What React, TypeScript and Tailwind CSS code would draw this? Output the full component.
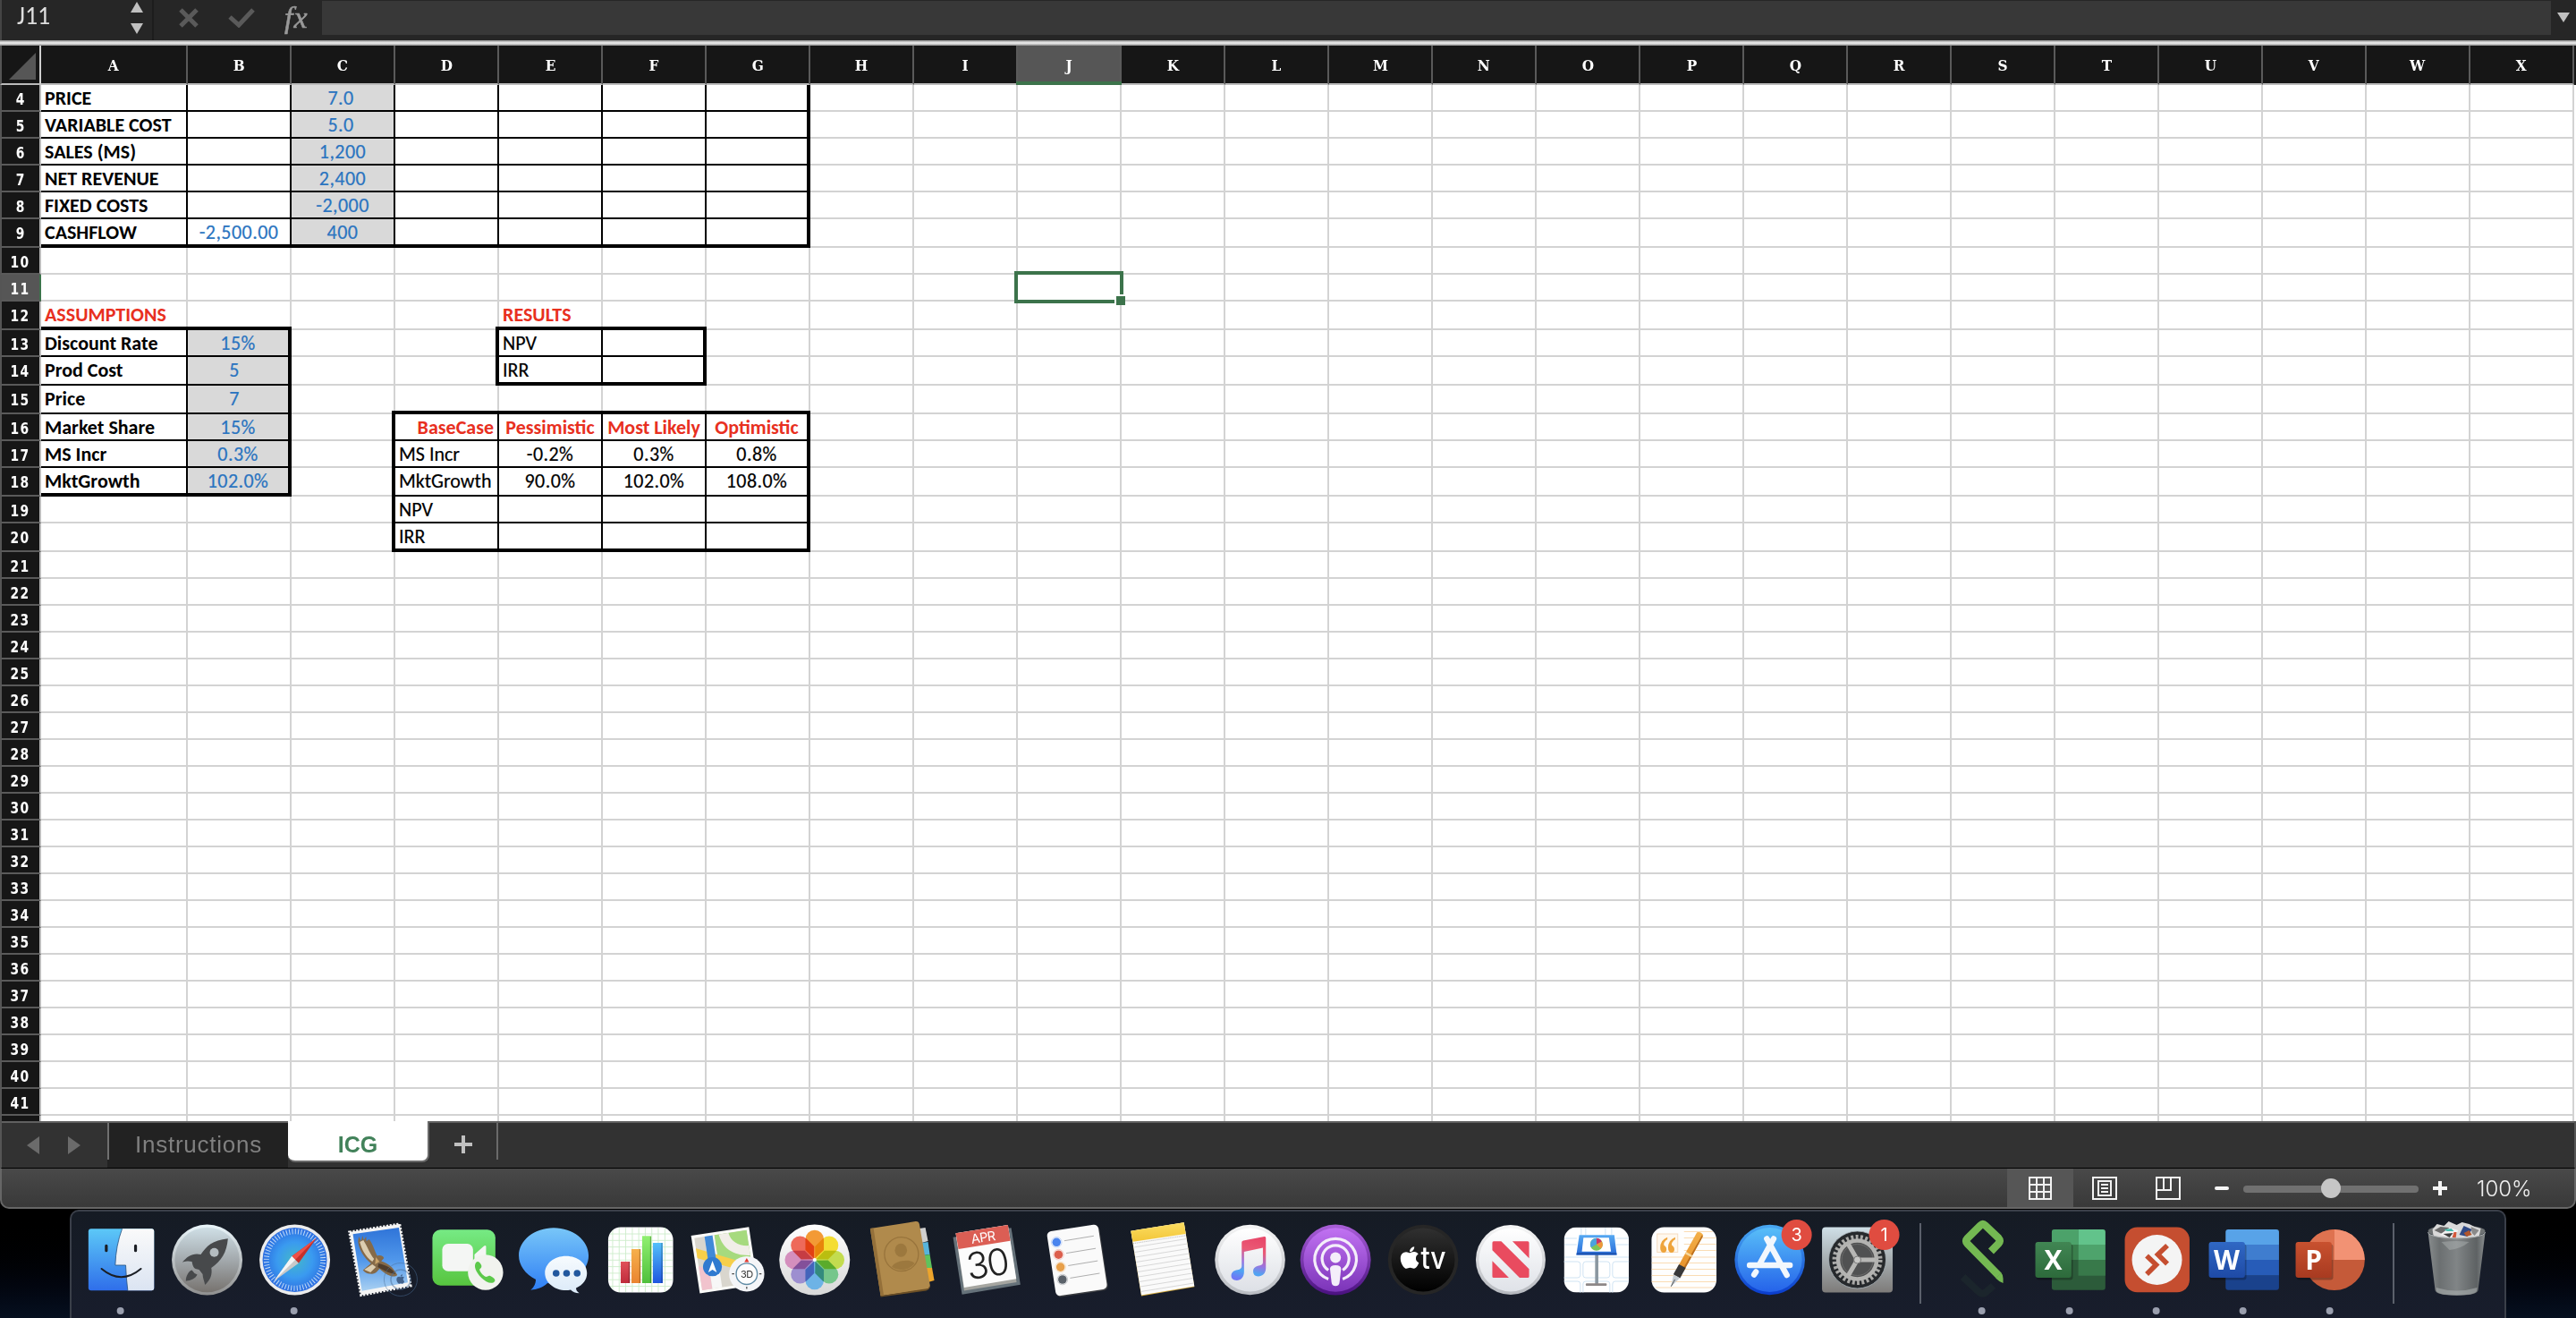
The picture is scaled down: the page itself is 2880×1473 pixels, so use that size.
import React from "react";
import { FaApple } from "react-icons/fa";

/* ---------- Spreadsheet data ---------- */

const COLUMNS = "ABCDEFGHIJKLMNOPQRSTUVWX".split("");
const TALL_ROWS = [9, 12, 14, 15, 18, 20];
const ROWS = Array.from({ length: 38 }, (_, i) => i + 4);

const BOLD = "justify-start pl-1 font-bold text-black";
const PLAIN = "justify-start pl-1 text-black [-webkit-text-stroke:0.2px]";
const BLUE = "justify-center text-[#2a74c0] tracking-[0.45px] [-webkit-text-stroke:0.2px]";
const RED = "justify-center font-bold text-[#e8301f]";
const RED_LEFT = "justify-start pl-1 font-bold text-[#e8301f]";
const NUM = "justify-center text-black tracking-[0.45px] [-webkit-text-stroke:0.2px]";

const CELLS: Record<string, [string, string]> = {
  A4: ["PRICE", BOLD],
  A5: ["VARIABLE COST", BOLD],
  A6: ["SALES (MS)", BOLD],
  A7: ["NET REVENUE", BOLD],
  A8: ["FIXED COSTS", BOLD],
  A9: ["CASHFLOW", BOLD],
  B9: ["-2,500.00", BLUE],
  C4: ["7.0", BLUE + " pr-1"],
  C5: ["5.0", BLUE + " pr-1"],
  C6: ["1,200", BLUE],
  C7: ["2,400", BLUE],
  C8: ["-2,000", BLUE],
  C9: ["400", BLUE],
  A12: ["ASSUMPTIONS", RED_LEFT],
  E12: ["RESULTS", RED_LEFT],
  A13: ["Discount Rate", BOLD],
  A14: ["Prod Cost", BOLD],
  A15: ["Price", BOLD],
  A16: ["Market Share", BOLD],
  A17: ["MS Incr", BOLD],
  A18: ["MktGrowth", BOLD],
  B13: ["15%", BLUE],
  B14: ["5", BLUE + " pr-2"],
  B15: ["7", BLUE + " pr-2"],
  B16: ["15%", BLUE],
  B17: ["0.3%", BLUE],
  B18: ["102.0%", BLUE],
  E13: ["NPV", PLAIN],
  E14: ["IRR", PLAIN],
  D16: ["BaseCase", "justify-end pr-[4px] font-bold text-[#e8301f]"],
  E16: ["Pessimistic", RED],
  F16: ["Most Likely", RED],
  G16: ["Optimistic", RED],
  D17: ["MS Incr", PLAIN],
  D18: ["MktGrowth", PLAIN],
  D19: ["NPV", PLAIN],
  D20: ["IRR", PLAIN],
  E17: ["-0.2%", NUM],
  F17: ["0.3%", NUM],
  G17: ["0.8%", NUM],
  E18: ["90.0%", NUM],
  F18: ["102.0%", NUM],
  G18: ["108.0%", NUM],
};

/* Bordered blocks: first/last column, first/last row, and whether the left/top edges are thick */
const BLOCKS = [
  { c0: 0, c1: 6, r0: 4, r1: 9, left: false, top: false },
  { c0: 0, c1: 1, r0: 13, r1: 18, left: false, top: true },
  { c0: 4, c1: 5, r0: 13, r1: 14, left: true, top: true },
  { c0: 3, c1: 6, r0: 16, r1: 20, left: true, top: true },
];

function borders(c: number, r: number) {
  let right = "border-r-2 border-r-[#d3d3d3]";
  let bottom = "border-b-2 border-b-[#d3d3d3]";
  let corner = "";
  for (const b of BLOCKS) {
    const inR = r >= b.r0 && r <= b.r1;
    const inC = c >= b.c0 && c <= b.c1;
    const edgeL = b.left && c === b.c0 - 1;
    const edgeT = b.top && r === b.r0 - 1;
    if (inR && inC) {
      right = c === b.c1 ? "border-r-4 border-r-black" : "border-r-2 border-r-black";
      bottom = r === b.r1 ? "border-b-4 border-b-black" : "border-b-2 border-b-black";
    }
    if (inR && edgeL) right = "border-r-4 border-r-black";
    if (inC && edgeT) bottom = "border-b-4 border-b-black";
    if ((inR || edgeT) && (inC || edgeL)) {
      const w = edgeL || c === b.c1 ? "w-1" : "w-0.5";
      const h = edgeT || r === b.r1 ? "h-1" : "h-0.5";
      corner = w + " " + h;
    }
  }
  if (corner) {
    corner += right.startsWith("border-r-4") ? " -right-1" : " -right-0.5";
    corner += bottom.startsWith("border-b-4") ? " -bottom-1" : " -bottom-0.5";
  }
  return { edges: right + " " + bottom, corner };
}

function Cell({ c, r }: { c: number; r: number }) {
  const data = CELLS[COLUMNS[c] + r];
  const shaded = (c === 2 && r <= 9) || (c === 1 && r >= 13 && r <= 18);
  const selected = c === 9 && r === 11;
  const { edges, corner } = borders(c, r);
  return (
    <div
      className={`relative flex items-start ${c === 0 ? "w-[164px]" : "w-[116px]"} shrink-0 ${shaded ? "bg-[#d9d9d9]" : "bg-white"} ${edges}`}
    >
      {data && (
        <div className={`flex h-6 w-full whitespace-nowrap text-[22px] leading-[29px] ${data[1]}`}>{data[0]}</div>
      )}
      {corner && <div className={`absolute bg-black ${corner}`} />}
      {selected && (
        <>
          <div className="absolute -inset-1 z-10 border-4 border-[#3c734b]" />
          <div className="absolute left-[108px] top-[22px] z-20 h-3 w-3 border-l-2 border-t-2 border-white bg-[#3c734b]" />
        </>
      )}
    </div>
  );
}

function Sheet() {
  return (
    <div className="flex h-[1202px] flex-col overflow-hidden bg-white font-['Carlito','Lato','Liberation_Sans',sans-serif]">
      <div className="flex h-11 shrink-0 bg-[#161616]">
        <div className="flex w-[46px] shrink-0 items-end justify-end border-b-2 border-l-2 border-r-2 border-b-[#bbbbbb] border-l-[#555] border-r-[#cfcfcf] pb-1 pr-1">
          <svg width="30" height="30" viewBox="0 0 30 30"><path d="M30 0V30H0Z" fill="#565656" /></svg>
        </div>
        {COLUMNS.map((l, c) => (
          <div
            key={l}
            className={`relative flex shrink-0 items-center justify-center border-b-2 border-r-2 border-b-[#bbbbbb] border-r-[#5a5a5a] pt-1 font-['DejaVu_Serif',serif] text-[17px] font-bold text-white ${c === 0 ? "w-[164px]" : "w-[116px]"} ${l === "J" ? "bg-[#565656]" : ""}`}
          >
            <span className="scale-x-90">{l}</span>
            {l === "J" && <div className="absolute -bottom-0.5 -left-0.5 -right-0.5 z-10 h-1 bg-[#3c734b]" />}
          </div>
        ))}
      </div>
      {[...ROWS, 42].map((r) => (
        <div key={r} className={`flex shrink-0 ${TALL_ROWS.includes(r) ? "h-8" : "h-[30px]"}`}>
          <div
            className={`flex w-[46px] shrink-0 justify-center border-b-2 border-l-2 border-r-2 border-b-[#5a5a5a] border-l-[#555] font-['DejaVu_Sans_Condensed','DejaVu_Sans',sans-serif] text-[17.5px] font-bold leading-[32px] text-white ${r === 11 ? "border-r-[#3c734b] bg-[#565656]" : "border-r-[#bbbbbb] bg-[#161616]"}`}
          >
            <span className="h-6 scale-x-[0.88] tracking-[1.6px]">{r < 42 ? r : ""}</span>
          </div>
          {COLUMNS.map((l, c) => (
            <Cell key={l} c={c} r={r} />
          ))}
        </div>
      ))}
    </div>
  );
}

/* ---------- Formula bar ---------- */

function FormulaBar() {
  return (
    <div className="flex h-[45px] items-start border-l-2 border-[#444] bg-[#262626]">
      <div className="flex h-[45px] w-[170px] items-start justify-between border-r-2 border-[#1d1d1d] pl-[17px] pr-[10px]">
        <span className="font-['Carlito','Lato',sans-serif] text-[28px] leading-[36px] text-[#dedede]">J11</span>
        <svg className="mt-0.5" width="14" height="36" viewBox="0 0 14 36">
          <path d="M0 12L7 0L14 12Z M0 24H14L7 36Z" fill="#c0c0c0" />
        </svg>
      </div>
      <svg className="ml-[28px] mt-[9px]" width="22" height="22" viewBox="0 0 22 22" fill="none" stroke="#5a5a5a" strokeWidth="5">
        <path d="M2 2L20 20M20 2L2 20" />
      </svg>
      <svg className="ml-[33px] mt-[9px]" width="30" height="22" viewBox="0 0 30 22" fill="none" stroke="#5a5a5a" strokeWidth="5">
        <path d="M2 10L12 19L28 2" />
      </svg>
      <span className="ml-[33px] w-[42px] font-['Liberation_Serif',serif] text-[34px] italic leading-[40px] tracking-[1px] text-[#999] [-webkit-text-stroke:0.6px]">fx</span>
      <div className="mt-px h-[38px] flex-1 bg-[#383838]" />
      <div className="flex h-[45px] w-[28px] justify-center pt-[14px]">
        <svg width="14" height="11" viewBox="0 0 14 11"><path d="M0 0H14L7 11Z" fill="#c0c0c0" /></svg>
      </div>
    </div>
  );
}

/* ---------- Tabs and status bar ---------- */

function TabBar() {
  return (
    <div className="flex h-[52px] items-start border-l-2 border-r-2 border-[#555] bg-[#323232] font-['Liberation_Sans',sans-serif] text-[25px]">
      <div className="flex h-full w-[118px] items-center gap-8 border-t-2 border-[#606060] pl-7">
        <svg width="14" height="20" viewBox="0 0 14 20"><path d="M14 0V20L0 10Z" fill="#6b6b6b" /></svg>
        <svg width="14" height="20" viewBox="0 0 14 20"><path d="M0 0V20L14 10Z" fill="#6b6b6b" /></svg>
      </div>
      <div className="h-full w-[202px] border-t-2 border-[#606060] bg-[#222222]">
        <div className="h-[41px] border-l-2 border-[#707070] text-center text-[26px] leading-[49px] tracking-[0.75px] text-[#808080]">Instructions</div>
      </div>
      <div className="h-[46px] w-[158px] rounded-b-lg border-b-2 border-r-2 border-[#6a6a6a] bg-white text-center font-bold leading-[52px] text-[#42825a]">ICG</div>
      <div className="h-full flex-1 border-t-2 border-[#606060]">
        <div className="flex h-[41px] w-[77px] items-center justify-center border-r-2 border-[#6a6a6a] pt-[7px]">
          <svg width="20" height="20" viewBox="0 0 20 20"><path d="M10 0V20M0 10H20" stroke="#c0c0c0" strokeWidth="4" /></svg>
        </div>
      </div>
    </div>
  );
}

function StatusBar() {
  return (
    <div className="flex h-[46px] items-stretch justify-end rounded-b-[10px] border-b-2 border-l-2 border-r-2 border-t border-[#666] border-t-black bg-linear-to-b from-[#494949] to-[#393939]">
      <div className="flex w-[74px] items-center justify-center bg-[#565656]">
        <svg width="26" height="26" viewBox="0 0 26 26" fill="none" stroke="#f2f2f2" strokeWidth="2">
          <path d="M1 1H25V25H1ZM9 1V25M17 1V25M1 9H25M1 17H25" />
        </svg>
      </div>
      <div className="flex w-[69px] items-center justify-center">
        <svg width="28" height="26" viewBox="0 0 28 26" fill="none" stroke="#f2f2f2" strokeWidth="2">
          <path d="M1 1H27V25H1ZM7 5H21V21H7ZM10 9H18M10 13H18M10 17H18" />
        </svg>
      </div>
      <div className="flex w-[73px] items-center justify-center">
        <svg width="28" height="26" viewBox="0 0 28 26" fill="none" stroke="#f2f2f2" strokeWidth="2">
          <path d="M1 1H27V25H1ZM9 1V15M17 1V15M1 15H18" />
        </svg>
      </div>
      <div className="flex w-[298px] items-center pl-4">
        <div className="h-1 w-4 rounded-xs bg-[#f5f5f5]" />
        <div className="relative ml-4 mt-0.5 h-2 w-[196px] rounded-full bg-[#707070]">
          <div className="absolute -top-2 left-[87px] h-[22px] w-[22px] rounded-full bg-[#c6c6c6]" />
        </div>
        <svg className="ml-4" width="16" height="16" viewBox="0 0 16 16"><path d="M8 0V16M0 8H16" stroke="#f5f5f5" strokeWidth="4" /></svg>
      </div>
      <div className="w-[120px] pl-[11px] font-['Inter','Open_Sans',sans-serif] text-[24px] font-light leading-[45px] text-[#f0f0f0]">100%</div>
    </div>
  );
}

/* ---------- Dock icons: origin is the centre of each slot ---------- */

function Grad({ id, stops }: { id: string; stops: string[] }) {
  return (
    <linearGradient id={id} x1="0" y1="0" x2="0" y2="1">
      {stops.map((s, i) => (
        <stop key={i} offset={i / (stops.length - 1)} stopColor={s} />
      ))}
    </linearGradient>
  );
}

const Finder = () => (
  <>
    <Grad id="fnB" stops={["#5cc8f7", "#2f6eea"]} />
    <Grad id="fnW" stops={["#fafafa", "#dbe4f2"]} />
    <rect x="-36.7" y="-34.7" width="73.4" height="69" rx="3" fill="url(#fnB)" />
    <path d="M1-34.7H34Q36.7-34.7 36.7-32V31.3Q36.7 34.3 34 34.3H7.3Q5.5 20 5 6H-6.7Q-6-16 1-34.7Z" fill="url(#fnW)" />
    <path d="M1-34.7Q-6-16-6.7 6H5Q5.5 20 7.3 34.3" fill="none" stroke="#26507e" strokeWidth="0.8" />
    <path d="M-16.7-15.7V-10.3M16-15.7V-10.3" stroke="#1b1e24" strokeWidth="3.2" strokeLinecap="round" />
    <path d="M-22 10Q0 28.4 22 10" fill="none" stroke="#1b1e24" strokeWidth="2" strokeLinecap="round" />
  </>
);

const Launchpad = () => (
  <>
    <Grad id="lpA" stops={["#cfdfe6", "#a3a9ad", "#77736f"]} />
    <Grad id="lpB" stops={["#eaf6fb", "#8f8f8f"]} />
    <circle r="39.5" fill="url(#lpB)" />
    <circle r="36.2" fill="url(#lpA)" />
    <path d="M23.3-23.7C6-22-1-15-7-6C-16-8-22-4-27.7 2.7C-22 1-20 1.5-17 2C-16 7-15 9-13 10L-9 11L-5 16C-5 20-3 24-2.3 28C4 22 6 16 4.7 9C16 1 22-8 23.3-23.7Z" fill="#47494b" />
    <circle cx="8" cy="-8.3" r="5" fill="#b4bcc0" />
    <path d="M-23.7 23.7C-24 18-20 12-17 11.5Q-15 15-11 16.5C-13 21-18 23-23.7 23.7Z" fill="#47494b" />
  </>
);

const Safari = () => (
  <>
    <radialGradient id="sfA">
      <stop offset="0" stopColor="#44b8c8" />
      <stop offset="0.55" stopColor="#3a9af0" />
      <stop offset="1" stopColor="#2c6de0" />
    </radialGradient>
    <circle r="39.5" fill="#ececec" />
    <circle r="36" fill="url(#sfA)" />
    <circle r="31.7" fill="none" stroke="#dbeafa" strokeWidth="6" strokeDasharray="1 2.32" opacity="0.85" />
    <path d="M24.3-24.3L-3.3-4L4.3 3.7Z" fill="#c5302a" />
    <path d="M24.3-24.3L-3.3-4L0.5 0Z" fill="#ee5047" />
    <path d="M-23.3 23.7L-3.3-4L4.3 3.7Z" fill="#c9c9c9" />
    <path d="M-23.3 23.7L-3.3-4L0.5 0Z" fill="#f5f5f5" />
  </>
);

const Mail = () => (
  <>
    <Grad id="mlA" stops={["#2f74d8", "#4f96ea", "#a8d0f2"]} />
    <path d="M-34.5-31L21.5-40L33.8 29L-21.5 39.5Z" fill="#f4f4f4" stroke="#f4f4f4" strokeWidth="3" strokeDasharray="2.2 1.6" />
    <path d="M-30.7-28.7L20.7-36L30.7 25.3L-20.7 34.7Z" fill="url(#mlA)" />
    <path d="M-25-21L-24-26L-21.5-21L-20-27L-18.5-22L-16-26L-15.5-21L-12.5-23C-8-17-7-11-3.5-4.5C0-5.5 2.5-5 4-2L1 1.5C9 4 14 8 19 17C15 20.5 8 18-1 10C-4 14-7 16.5-11 15.5Q-16 16-19.5 11.5L-10.5 4C-18-2-24-11-25-21Z" fill="#856a49" />
    <path d="M-23-20L-19-22C-14-14-12-7-7-1L-9 2C-17-4-21-12-23-20ZM-18 11L-9 5L-5 8L-11 14Z" fill="#dccdb0" />
    <path d="M-2 4C6 6 13 9 17 16C10 15 4 12-3 8Z" fill="#4f3d2c" />
    <path d="M-5-3L-1 2L-6 5Z" fill="#c9a36a" />
    <g fill="none" stroke="#4b6f99" opacity="0.5">
      <circle cx="22.7" cy="22" r="18.5" strokeWidth="1" />
      <circle cx="22.7" cy="22" r="11" strokeWidth="1.5" />
    </g>
    <FaApple x="16.5" y="15.5" size={12} color="#42628c" />
  </>
);

const FaceTime = () => (
  <>
    <Grad id="ftA" stops={["#76ea84", "#57c53f"]} />
    <rect x="-39.7" y="-33.7" width="70.4" height="62.4" rx="9" fill="url(#ftA)" />
    <rect x="-28.7" y="-18" width="34.4" height="30.7" rx="6.5" fill="#f4f6f4" />
    <path d="M7.3-6L18-15.5Q20.3-17 20.3-14.5V10H7.3Z" fill="#f4f6f4" />
    <circle cx="19.7" cy="14" r="19.7" fill="#f1f3ee" />
    <path d="M9 3C11 1 13 2 15 6C16 9 13 10 13 11C14 15 18 18 20 19C22 19 23 17 25 18C29 20 31 22 30 24C27 28 20 25 15 20C9 14 6 7 9 3Z" fill="#5cc94a" />
  </>
);

const Messages = () => (
  <>
    <Grad id="msA" stops={["#78c6f8", "#2f7ff5"]} />
    <Grad id="msB" stops={["#f7fbfe", "#dbeaf8"]} />
    <path d="M0-35.7C21.5-35.7 39-21.8 39-4.7S21.5 26.5 0 26.5Q-4 26.5-7 26C-12 31-19 33-25.7 33.7Q-20 29-20 22C-32 16-39 6-39-4.7C-39-21.8-21.5-35.7 0-35.7Z" fill="url(#msA)" />
    <path d="M13.7-4.3C27-4.3 37.2 4.2 37.2 14.7C37.2 22 33 28 25 31.5Q25 35 28.7 37.3Q22 37 19 33.5Q16 34 13.7 34C0.7 34-9.8 25.3-9.8 14.7S0.7-4.3 13.7-4.3Z" fill="url(#msB)" />
    <g fill="#22589e">
      <circle cx="2.7" cy="15" r="3.8" />
      <circle cx="14.4" cy="15" r="3.8" />
      <circle cx="26.2" cy="15" r="3.8" />
    </g>
  </>
);

const Numbers = () => (
  <>
    <Grad id="nuR" stops={["#e0505a", "#c02c3c"]} />
    <Grad id="nuO" stops={["#f6b04c", "#ea8430"]} />
    <Grad id="nuG" stops={["#90f070", "#50c03c"]} />
    <Grad id="nuB" stops={["#54c0fa", "#1e56e0"]} />
    <rect x="-36" y="-36.4" width="72.6" height="73" rx="14" fill="#fff" />
    <path
      d="M-31-33V33M-23.7-36V36M-16.4-36V36M-9-36V36M-1.8-36V36M5.5-36V36M12.8-36V36M20-36V36M27.4-36V36M-34-29H34M-36-21.7H36M-36-14.4H36M-36-7H36M-36 .3H36M-36 7.6H36M-36 14.9H36M-36 22.2H36M-34 29.5H34"
      stroke="#cdeccb" strokeWidth="0.9"
    />
    <rect x="-22" y="2" width="10.3" height="24" fill="url(#nuR)" />
    <rect x="-10" y="-12" width="10.3" height="38" fill="url(#nuO)" />
    <rect x="2" y="-26.7" width="10.3" height="52.7" fill="url(#nuG)" />
    <rect x="14" y="-19" width="11" height="45" fill="url(#nuB)" />
    <path d="M-12.6 2V26M-.6-12V26M11.4-26V26M24-19V26" stroke="#000" strokeOpacity="0.3" />
  </>
);

const Maps = () => (
  <>
    <clipPath id="mpC"><rect x="-29.5" y="-29.5" width="59" height="59" /></clipPath>
    <g transform="translate(-3 0.4) rotate(-8.6)">
      <rect x="-32.7" y="-32.7" width="65.4" height="65.4" fill="#fbfbf8" />
      <g clipPath="url(#mpC)">
        <rect x="-30" y="-30" width="60" height="60" fill="#d9d6ce" />
        <path d="M-7-30H30V12L-7-6Z" fill="#a6da7e" />
        <path d="M-2-30C0-12 12-3 30-1V-12C18-13 10-20 9-30Z" fill="#f1eee8" />
        <path d="M-30 2L-18 8V30H-30Z" fill="#f1c3cd" />
        <path d="M-18-30H-7V30H-18Z" fill="#f7f7f7" />
        <path d="M-30-18L30 10V20L-30-7Z" fill="#f7cf4a" />
        <path d="M-18-30H-9V8H-18Z" fill="#4089d8" />
      </g>
    </g>
    <circle cx="-16.3" cy="7.7" r="10.6" fill="#2f7ad0" />
    <path d="M-16.3 1L-11.5 14L-16.3 11L-21 14Z" fill="#fff" />
    <circle cx="22" cy="15.7" r="19.7" fill="#f4f5f8" />
    <circle cx="22" cy="15.7" r="11.8" fill="#fdfdfe" stroke="#5f8ba5" strokeWidth="1.4" />
    <path d="M22-2L24.6 2.6H19.4Z" fill="#e13a30" />
    <path d="M5.5 15.7H8M36 15.7H38.5M22 30V32.5" stroke="#444" strokeWidth="1.2" />
    <text x="22" y="19.7" textAnchor="middle" fontFamily="Inter, sans-serif" fontSize="11" letterSpacing="-0.5" fill="#333">3D</text>
  </>
);

const PETALS = ["#f39a35", "#f4dd33", "#c3dc4f", "#76c68b", "#6db3e6", "#9d8fd0", "#d48fbd", "#ee6a5a"];
const Photos = () => (
  <>
    <Grad id="phA" stops={["#ffffff", "#d8d8d8"]} />
    <circle r="39.5" fill="url(#phA)" />
    <g className="isolate">
      {PETALS.map((p, i) => (
        <path key={p} className="mix-blend-multiply" d="M0-1L-10.3-11V-23A10.3 10.3 0 0 1 10.3-23V-11Z" fill={p} transform={`rotate(${i * 45})`} />
      ))}
    </g>
    <circle r="2" fill="#fff" />
  </>
);

const Contacts = () => (
  <>
    <path d="M19-35L26-36L29-21L22-19Z" fill="#cfcfcf" />
    <path d="M22-19L29-20L31-6L24-5Z" fill="#58b4dc" />
    <path d="M24-5L31-6L33.5 9L27 10Z" fill="#5fc35c" />
    <path d="M26 9L33.5 9L36 23L29 25Z" fill="#eda52c" />
    <path d="M-35.7-35L15-43Q18.5-43.5 19.3-40L31.3 29Q31 32 27 33L-24 40.3Z" fill="#b08a4c" />
    <path d="M-35.7-35L-32-35.6L-20.5 39.8L-24 40.3Z" fill="#94703a" />
    <path d="M-24 40.3L29 32L31 29V31Q30 34 27 34.5L-24 41.5Z" fill="#6d5026" />
    <circle cx="-0.7" cy="-6.3" r="19" fill="none" stroke="#98743c" strokeWidth="1.3" />
    <ellipse cx="-1.3" cy="-10.7" rx="6.8" ry="7.5" fill="#9c783e" />
    <path d="M-11.5 8C-9 1 10-2 14 4A19 19 0 0 1-11.5 8Z" fill="#9c783e" />
  </>
);

const Calendar = () => (
  <>
    <path d="M-37-25.3L28-35.7L38.3 27.7L-27 38.7Z" fill="#66727a" />
    <path d="M-34-29.7L24.3-39L34 25L-24.7 34.5Z" fill="#a5a5a0" />
    <path d="M-34-29.7L24.3-39L33.7 21.3L-24.7 31Z" fill="#fcfcfc" />
    <path d="M-34-29.7L24.3-39L27-21.3L-31-12Z" fill="#db5e54" />
    <text transform="translate(-2.6 -20) rotate(-8.8)" textAnchor="middle" fontFamily="Inter, sans-serif" fontSize="14.5" letterSpacing="-0.5" fill="#fff">APR</text>
    <text transform="translate(3.3 19) rotate(-8.8)" textAnchor="middle" fontFamily="Inter, sans-serif" fontWeight="300" fontSize="41" letterSpacing="-2" fill="#222">30</text>
  </>
);

const Reminders = () => (
  <>
    <g transform="rotate(-8.6)">
      <rect x="-28" y="-34.5" width="58.5" height="73" rx="5" fill="#3a3c40" />
      <rect x="-28.5" y="-36" width="58" height="73" rx="5" fill="#fafafa" />
    </g>
    {["#4a84ee", "#dc5f4d", "#e8a04a", "#5b626a"].map((c, i) => (
      <g key={c} transform={`translate(${i * 2.2} ${i * 13.9})`}>
        <circle cx="-22.3" cy="-19.7" r="5.8" fill="none" stroke={c} strokeOpacity="0.3" />
        <circle cx="-22.3" cy="-19.7" r="4.8" fill={c} />
        <path d="M-13.7-21.3L19.3-26.7" stroke="#9a9a9a" strokeWidth="0.8" />
      </g>
    ))}
  </>
);

const Notes = () => (
  <>
    <Grad id="ntA" stops={["#fbdd62", "#f3c638"]} />
    <path d="M-35-32.3L24.3-41.7L36 30.3L-23.3 40.5Z" fill="#d3a93a" />
    <path d="M-35-32.3L24.3-41.7L36 29.6L-23.3 39.6Z" fill="#fafafa" />
    <path d="M-35-32.3L24.3-41.7L26.3-29L-32.9-20.3Z" fill="url(#ntA)" />
    <path d="M-32.5-18.3L26.5-27.2" stroke="#999" strokeWidth="0.7" strokeDasharray="1 1" />
    {[0, 1, 2, 3, 4, 5, 6, 7, 8, 9].map((i) => (
      <path key={i} d="M-31.8-14L27.3-23.5" stroke="#cfcfcf" strokeWidth="0.8" transform={`translate(${i * 0.9} ${i * 5.5})`} />
    ))}
  </>
);

const Music = () => (
  <>
    <Grad id="muA" stops={["#ffffff", "#dde0e6"]} />
    <Grad id="muC" stops={["#f5f5f5", "#b9bcc2"]} />
    <linearGradient id="muB" x1="0.6" y1="0" x2="0.4" y2="1">
      <stop offset="0" stopColor="#e8486a" />
      <stop offset="0.3" stopColor="#ea5a75" />
      <stop offset="0.6" stopColor="#9a74e0" />
      <stop offset="0.8" stopColor="#4ea6f2" />
      <stop offset="1" stopColor="#6e78f5" />
    </linearGradient>
    <circle r="39.3" fill="url(#muC)" />
    <circle r="35.5" fill="url(#muA)" />
    <path d="M-9.3-19.5Q-9.3-21-7.5-21.4L16-26Q17.7-26.3 17.7-24.5V9C17.7 15 14 18.5 9 18.5Q3.5 18 3.5 13C3.5 9 6.5 7.3 10 6.6Q14.4 5.8 14.4 3V-13.5L-6.7-9V13.5C-6.7 19-10 23-15 23Q-21 22.5-21 18C-21 14-18 12-14 11.3Q-9.3 10.5-9.3 7Z" fill="url(#muB)" />
  </>
);

const Podcasts = () => (
  <>
    <Grad id="pcA" stops={["#c172f2", "#7b34b8"]} />
    <Grad id="pcB" stops={["#a95fd8", "#4a1180"]} />
    <circle r="39.5" fill="url(#pcB)" />
    <circle r="35.8" fill="url(#pcA)" />
    <g fill="none" stroke="#f4eefa" strokeWidth="3.2">
      <path d="M-8 21.5A23.3 23.3 0 1 1 8 21.5" />
      <path d="M-8 11.5A15 15 0 1 1 8 11.5" />
    </g>
    <circle cy="-2.5" r="6" fill="#f4eefa" />
    <path d="M-6.2 10Q-6 6 0 6T6.2 10L4.5 25Q4 29.3 0 29.3T-4.5 25Z" fill="#f4eefa" />
  </>
);

const AppleTV = () => (
  <>
    <Grad id="tvA" stops={["#303030", "#000000"]} />
    <circle r="39.3" fill="#262626" />
    <circle r="35.5" fill="url(#tvA)" />
    <FaApple x="-29" y="-16.5" size={28} color="#fff" />
    <text x="-2.5" y="10.3" fontFamily="Inter, sans-serif" fontWeight="500" fontSize="34" textLength="28" lengthAdjust="spacingAndGlyphs" fill="#fff">tv</text>
  </>
);

const News = () => (
  <>
    <Grad id="nwA" stops={["#ffffff", "#dfe2e8"]} />
    <Grad id="nwB" stops={["#f7f7f7", "#b5b8be"]} />
    <circle r="39" fill="url(#nwB)" />
    <circle r="35.5" fill="url(#nwA)" />
    <path d="M-20.5-19Q-20.5-20.7-19-20.7H-10.6L20.6 10.3V18.5Q20.6 20 19 20H10L-20.5-10.7ZM2-20.7H19Q20.6-20.7 20.6-19V-1.7ZM-20.5 1.3L-2 20H-19Q-20.5 20-20.5 18.5Z" fill="#e94b5f" />
  </>
);

const Keynote = () => (
  <>
    <Grad id="knA" stops={["#55a8f2", "#2a6cd8"]} />
    <clipPath id="knC"><rect x="-36.3" y="-36.4" width="72.6" height="73" rx="14" /></clipPath>
    <g clipPath="url(#knC)">
      <rect x="-36.3" y="-36.4" width="72.6" height="73" fill="#fff" />
      <g fill="none" stroke="#cfe3f3" strokeWidth="1">
        <path d="M-17-36V-28M-12-36V-28M10-36V-28M17-36V-28M-36-24H-22M-36-17H-22M22-24H36M22-17H36M-36-3H36" />
        <rect x="-40" y="2" width="22" height="18" rx="3" />
        <rect x="-15" y="2" width="30" height="18" rx="3" />
        <rect x="18" y="2" width="22" height="18" rx="3" />
        <rect x="-40" y="24" width="22" height="18" rx="3" />
        <rect x="-15" y="24" width="30" height="18" rx="3" />
        <rect x="18" y="24" width="22" height="18" rx="3" />
      </g>
    </g>
    <rect x="-1.5" y="-6" width="3.6" height="34" fill="#8b97a0" />
    <rect x="-12" y="26.3" width="23.5" height="2.6" rx="1" fill="#8d8787" />
    <path d="M-19.2-27.7H20L22.7-5.5H-22.4Z" fill="url(#knA)" />
    <path d="M-22-8H22.3L22.7-5.5H-22.4Z" fill="#1f57b5" />
    <path d="M-14.5-24.7H14L16.3-9.3H-16.3Z" fill="#fff" />
    <circle cy="-17.3" r="7" fill="#7cc55a" />
    <path d="M0-17.3V-24.3A7 7 0 0 1 6-20.5Z" fill="#c9366a" />
    <path d="M0-17.3L6-20.5A7 7 0 0 1 5-12.5Z" fill="#f0953a" />
    <path d="M0-17.3V-24.3A7 7 0 0 0-6-13.8Z" fill="#4ba2e0" />
  </>
);

const Pages = () => (
  <>
    <Grad id="pgA" stops={["#f3b04a", "#e8922a"]} />
    <rect x="-36.3" y="-36.4" width="72.6" height="73" rx="14" fill="#fefefe" />
    <path d="M0-31.5H32M0-24.5H36M0-17.5H36M0-10.5H36M-36-3H36M-36 3.5H36M-36 10.5H36M-36 17.5H36M-36 24.5H36M-32 31H32" stroke="#fadcb4" strokeWidth="1" />
    <rect x="-30" y="-29" width="23" height="20.5" fill="#fff8ee" stroke="#f5dcc0" strokeWidth="1" />
    <text x="-18.5" y="13" textAnchor="middle" fontFamily="Liberation Serif, serif" fontWeight="700" fontSize="56" textLength="20" lengthAdjust="spacingAndGlyphs" fill="#eea43c">“</text>
    <g transform="rotate(29 2 0)">
      <path d="M-2-33Q2-36.5 6-33V12H-2Z" fill="url(#pgA)" />
      <path d="M4.5-33L6-32V12H4Z" fill="#bb6f1e" />
      <rect x="-2" y="-8" width="8" height="2.4" fill="#f7d79a" />
      <rect x="-2.3" y="8" width="8.6" height="13" fill="#38383a" />
      <path d="M-2 21H6L2 34.5Z" fill="#c5ccd2" />
      <path d="M2 25V34" stroke="#4a4a4a" strokeWidth="0.8" />
    </g>
  </>
);

function Badge({ n }: { n: string }) {
  return (
    <>
      <circle cx="30" cy="-28" r="17" fill="#e04c40" />
      <text x="30" y="-21" textAnchor="middle" fontFamily="Inter, sans-serif" fontSize="20" fill="#fff">{n}</text>
    </>
  );
}

const AppStore = () => (
  <>
    <Grad id="asA" stops={["#58bef8", "#2563ea"]} />
    <Grad id="asB" stops={["#49a9f2", "#0a3ccc"]} />
    <circle r="39.3" fill="url(#asB)" />
    <circle r="36" fill="url(#asA)" />
    <g stroke="#f2f7fd" strokeWidth="6.5" strokeLinecap="round">
      <path d="M-3.3-23.5L19 17M4.3-23.5L-11.5 5M-22.5 6H22.5M-15.5 13.5L-17.5 16.5" />
    </g>
    <Badge n="3" />
  </>
);

const Settings = () => (
  <>
    <Grad id="stA" stops={["#cfdfe7", "#7d7b79"]} />
    <rect x="-39.5" y="-36.4" width="79" height="73" rx="4" fill="url(#stA)" />
    <circle r="32" fill="#26292c" />
    <circle r="32" fill="none" stroke="#aab4ba" strokeWidth="0.8" />
    <circle r="25.5" fill="none" stroke="#a9a9a7" strokeWidth="5" strokeDasharray="2.9 2.44" />
    <circle r="21.5" fill="#505152" stroke="#b3b3b1" strokeWidth="4.5" />
    <circle r="17.5" fill="none" stroke="#6a6a6a" strokeWidth="1" />
    <path d="M0 0H20M0 0L-10-17.3M0 0L-10 17.3" stroke="#b7b7b5" strokeWidth="5" />
    <circle r="4" fill="#c8c8c6" stroke="#777" strokeWidth="1" />
    <Badge n="1" />
  </>
);

const Clip = () => (
  <>
    <path d="M-22 19L-5 35Q0 40 5 35L12 29" fill="none" stroke="#1b252c" strokeWidth="8" />
    <path
      d="M9.4-9.5L17.7-18Q20.5-21.3 17.7-24.5L3-38.5Q0.3-41-2.4-38.5L-17-24Q-20-21-17-18L18 17.5"
      fill="none" stroke="#74b852" strokeWidth="8.4"
    />
    <path d="M14.7 20.5L20.7 14.3Q23.2 17 23 21V26Q19 25 14.7 20.5Z" fill="#74b852" />
  </>
);

const Tile = ({ letter, id, stops }: { letter: string; id: string; stops: string[] }) => (
  <>
    <Grad id={id} stops={stops} />
    <rect x="-38" y="-17.5" width="41" height="40" rx="3" fill="#000" opacity="0.25" />
    <rect x="-39" y="-20" width="40.3" height="40" rx="3" fill={`url(#${id})`} />
    <text x="-19" y="10.8" textAnchor="middle" fontFamily="Open Sans, sans-serif" fontWeight="700" fontSize="30" fill="#fff">{letter}</text>
  </>
);

const Excel = () => (
  <>
    <clipPath id="xlC"><rect x="-20.7" y="-34" width="60" height="67.7" rx="3" /></clipPath>
    <g clipPath="url(#xlC)">
      <rect x="-21" y="-34" width="61" height="68" fill="#2c5b3a" />
      <rect x="-21" y="-34" width="30" height="17" fill="#4ca26a" />
      <rect x="-21" y="-17" width="30" height="17" fill="#3a7e4c" />
      <rect x="9" y="-34" width="31" height="17" fill="#62c38b" />
      <rect x="9" y="-17" width="31" height="17" fill="#4ea36c" />
      <rect x="9" y="0" width="31" height="17.7" fill="#38794a" />
    </g>
    <Tile letter="X" id="xlT" stops={["#418653", "#2d6a3b"]} />
  </>
);

const Remote = () => (
  <>
    <rect x="-36" y="-36.4" width="72.4" height="72.7" rx="14" fill="#c54e30" />
    <circle r="28" fill="#f4f4f4" />
    <path d="M-11.5-4.5L-1 5.5L-11.5 16M11.5-16L1-6L11.5 4.5" fill="none" stroke="#c54e30" strokeWidth="5.6" />
  </>
);

const Word = () => (
  <>
    <clipPath id="wdC"><rect x="-20.3" y="-34" width="59.7" height="67.7" rx="3" /></clipPath>
    <g clipPath="url(#wdC)">
      <rect x="-21" y="-34" width="61" height="17" fill="#58a3e8" />
      <rect x="-21" y="-17" width="61" height="17" fill="#3f7dcf" />
      <rect x="-21" y="0" width="61" height="17.7" fill="#275cb8" />
      <rect x="-21" y="17.7" width="61" height="17" fill="#1a428c" />
    </g>
    <Tile letter="W" id="wdT" stops={["#3068c4", "#1e4aa6"]} />
  </>
);

const PowerPoint = () => (
  <>
    <circle cx="4.3" r="34" fill="#c55a39" />
    <path d="M4.3-34V0H-29.7A34 34 0 0 1 4.3-34Z" fill="#de7250" />
    <path d="M4.3-34V0H38.3A34 34 0 0 0 4.3-34Z" fill="#f29274" />
    <Tile letter="P" id="ppT" stops={["#c8512f", "#a83a20"]} />
  </>
);

const Trash = () => (
  <>
    <linearGradient id="trA">
      <stop offset="0" stopColor="#8d9192" />
      <stop offset="0.2" stopColor="#6f7374" />
      <stop offset="0.5" stopColor="#85898a" />
      <stop offset="0.85" stopColor="#616566" />
      <stop offset="1" stopColor="#909495" />
    </linearGradient>
    <ellipse cy="-32" rx="32" ry="7" fill="#6f7374" />
    <path d="M-27-34L-22-40L-14-38L-9-43L0-39L6-42L14-40L20-37L27-35L25-26L10-22H-14L-26-27Z" fill="#d9d9d9" />
    <path d="M-25-33L-18-37L-9-36L-4-32L-14-28Z" fill="#6b6b6b" />
    <path d="M-19-28L-8-36L2-33L-4-24Z" fill="#f2f2f2" />
    <path d="M-14-34L-6-35L-3-32L-11-32Z" fill="#46bcae" />
    <path d="M-15-29L-4-30L-8-25Z" fill="#3c3c3c" />
    <path d="M-3-31L0-31L-1-24L-5-25Z" fill="#d4583a" />
    <path d="M3-28L8-38L17-34L12-26Z" fill="#304a86" />
    <path d="M8-30L14-33L17-28L11-26Z" fill="#b0562c" />
    <path d="M16-37L25-33L20-27L17-30Z" fill="#8a8a8a" />
    <path d="M-32-31C-31-22 31-22 32-31L24 34Q23 39.7 0 39.7T-24 34Z" fill="url(#trA)" opacity="0.96" />
    <path d="M-23 31Q0 38 23 31L22.5 35Q20 39.5 0 39.5T-22.5 35Z" fill="#a9adae" opacity="0.6" />
    <path d="M-32-31C-31-22 31-22 32-31" fill="none" stroke="#b3b7b8" strokeWidth="1" />
    <path d="M-17-20Q0-22 14-20Q4-12-8-11Z" fill="#b9bdbe" opacity="0.4" />
  </>
);

type DockApp = { icon: () => React.ReactElement; running?: boolean; dx?: number };
const APPS: DockApp[] = [
  { icon: Finder, running: true },
  { icon: Launchpad, dx: -1 },
  { icon: Safari, running: true },
  { icon: Mail, dx: -1.3 },
  { icon: FaceTime, dx: -0.4 },
  { icon: Messages, dx: -1.5 },
  { icon: Numbers, dx: -1.6 },
  { icon: Maps, dx: -1.7 },
  { icon: Photos, dx: -0.8 },
  { icon: Contacts },
  { icon: Calendar, dx: -3 },
  { icon: Reminders },
  { icon: Notes, dx: -1.2 },
  { icon: Music },
  { icon: Podcasts, dx: -1.4 },
  { icon: AppleTV, dx: -0.5 },
  { icon: News, dx: 0.4 },
  { icon: Keynote, dx: -0.7 },
  { icon: Pages, dx: 0.2 },
  { icon: AppStore, dx: -0.9 },
  { icon: Settings },
];
const RECENT: DockApp[] = [
  { icon: Clip, running: true },
  { icon: Excel, running: true },
  { icon: Remote, running: true },
  { icon: Word, running: true },
  { icon: PowerPoint, running: true },
];

function Slot({ icon: Icon, running, dx = 0 }: DockApp) {
  return (
    <svg className="h-[119px] w-[97.1px] shrink-0" viewBox="-48.55 -54 97.1 119">
      <g transform={`translate(${dx} 0)`}>
        <Icon />
      </g>
      {running && <circle cx="-0.9" cy="57" r="4" fill="#9a9fae" />}
    </svg>
  );
}

function Dock() {
  return (
    <div className="ml-[78px] mt-px flex h-[121px] w-[2724px] items-start rounded-t-[10px] border-l-2 border-r-2 border-t-2 border-[#3a3f49] bg-linear-to-b from-[#151b24] to-[#181d2c] pl-[6.5px]">
      {APPS.map((a, i) => (
        <Slot key={i} {...a} />
      ))}
      <div className="ml-[20.5px] mr-[20.5px] mt-[13px] h-[90px] w-0.5 shrink-0 bg-[#5b606b]" />
      {RECENT.map((a, i) => (
        <Slot key={i} {...a} />
      ))}
      <div className="ml-[21.5px] mr-[20.5px] mt-[13px] h-[90px] w-0.5 shrink-0 bg-[#5b606b]" />
      <Slot icon={Trash} />
    </div>
  );
}

export default function App() {
  return (
    <div className="flex h-[1473px] w-[2880px] flex-col overflow-hidden bg-linear-to-b from-black from-92% to-[#061020]">
      <FormulaBar />
      <div className="h-1.5 shrink-0 bg-linear-to-b from-[#8c8c8c] via-[#f4f4f4] to-[#8c8c8c]" />
      <Sheet />
      <TabBar />
      <StatusBar />
      <Dock />
    </div>
  );
}
